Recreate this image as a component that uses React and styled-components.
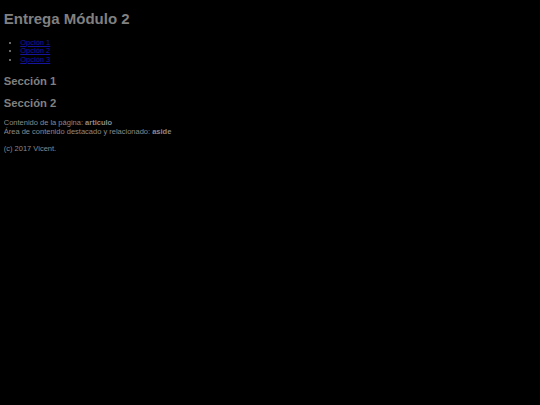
import React from 'react'
import styled, { createGlobalStyle } from 'styled-components';

const GlobalStyle = createGlobalStyle`
    html, body {
        background-color: #000000;
    }
    body {
        margin: 3.75px;
        font-family: "Liberation Sans", Arial, sans-serif;
        font-size: 7.5px;
        color: #8a8a8a;
    }
`;

function App () {

    return (
        <>
            <GlobalStyle />
            <Header>
                <Title>Entrega Módulo 2</Title>
                <nav>
                    <Menu>
                        <MenuItem><MenuLink href="#">Opción 1</MenuLink></MenuItem>
                        <MenuItem><MenuLink href="#">Opción 2</MenuLink></MenuItem>
                        <MenuItem><MenuLink href="#">Opción 3</MenuLink></MenuItem>
                    </Menu>
                </nav>
            </Header>
            <main>
                <section>
                    <SectionTitle>Sección 1</SectionTitle>
                </section>
                <section>
                    <SectionTitle>Sección 2</SectionTitle>
                </section>
                <Text>
                    Contenido de la página: <b>articulo</b><br />
                    Área de contenido destacado y relacionado: <b>aside</b>
                </Text>
            </main>
            <Footer>(c) 2017 Vicent.</Footer>
        </>
    )
}

const Header = styled.header`
    display: block;
`;

const Title = styled.h1`
    font-size: 15px;
    font-weight: bold;
    margin: 6.5px 0 11.5px;
    color: #808080;
`;

const Menu = styled.ul`
    margin: 7.5px 0;
    padding-left: 16.5px;
    list-style: disc;
`;

const MenuItem = styled.li`
    line-height: 8.6px;
`;

const MenuLink = styled.a`
    color: #1515a0;
    text-decoration: underline;
`;

const SectionTitle = styled.h2`
    font-size: 11.25px;
    font-weight: bold;
    margin: 10.3px 0 9.3px;
    color: #808080;
`;

const Text = styled.p`
    margin: 10px 0 8.5px;
    line-height: 8.6px;
`;

const Footer = styled.footer`
    line-height: 8.6px;
    margin: 8.5px 0;
`;

export default App;
